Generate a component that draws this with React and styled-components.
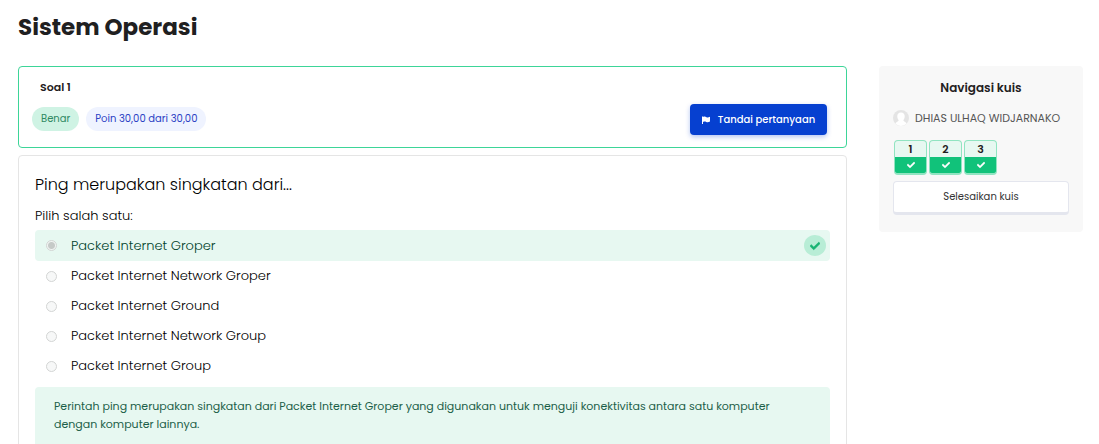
import React from 'react';
import styled, { createGlobalStyle } from 'styled-components';

const GlobalStyle = createGlobalStyle`
  *, *::before, *::after { box-sizing: border-box; }
  html { scrollbar-width: none; }
  body {
    margin: 0;
    background: #fff;
    color: #1f2021;
    font-family: Poppins, Inter, "Liberation Sans", sans-serif;
    font-size: 13px;
  }
  button, input { font-family: inherit; }
`;

const Page = styled.div`
  padding: 8px 16px 0 18px;
`;

const Title = styled.h1`
  margin: 0 0 20px;
  font-size: 23px;
  line-height: 38px;
  font-weight: 700;
`;

const Columns = styled.div`
  display: grid;
  grid-template-columns: minmax(0, 1fr) 204px;
  gap: 32px;
  align-items: start;
`;

const Main = styled.main`
  display: flex;
  flex-direction: column;
  gap: 7px;
`;

const InfoCard = styled.section`
  display: flex;
  align-items: flex-end;
  justify-content: space-between;
  padding: 12px 19px 12px 13px;
  border: 1px solid #3dd598;
  border-radius: 4px;
`;

const QuestionNumber = styled.h2`
  margin: 0 0 12px 8px;
  font-size: 11px;
  line-height: 16px;
  font-weight: 600;
`;

const Badges = styled.div`
  display: flex;
  gap: 7px;
  margin-bottom: 4px;
`;

const Badge = styled.span`
  padding: 0 9px;
  border-radius: 12px;
  font-size: 10px;
  line-height: 24px;
  background: ${(p) => (p.$correct ? '#cff3e4' : '#eff3ff')};
  color: ${(p) => (p.$correct ? '#2f8a62' : '#2b41c4')};
`;

const FlagButton = styled.button`
  display: flex;
  align-items: center;
  justify-content: center;
  gap: 8px;
  width: 137px;
  height: 31px;
  padding: 0;
  border: 0;
  border-radius: 4px;
  background: #0640d0;
  box-shadow: 0 2px 5px rgba(6, 64, 208, 0.3);
  color: #fff;
  font-size: 10px;
  font-weight: 500;
  white-space: nowrap;
`;

const QuestionCard = styled.section`
  padding: 17px 16px 20px;
  border: 1px solid #e5e5e5;
  border-radius: 4px;
`;

const QuestionText = styled.p`
  margin: 0 0 8px;
  color: #000;
  font-size: 16px;
  line-height: 24px;
  font-weight: 300;
`;

const Options = styled.fieldset`
  margin: 0 0 6px;
  padding: 0;
  border: 0;
  color: #000;
  font-weight: 300;
`;

const Prompt = styled.legend`
  padding: 0 0 3px;
  line-height: 22px;
`;

const Option = styled.div`
  display: flex;
  align-items: center;
  gap: 14px;
  height: ${(p) => (p.$correct ? '31px' : '30px')};
  padding: 0 4px 0 11px;
  border-radius: 4px;
  background: ${(p) => (p.$correct ? '#e7f8f1' : 'transparent')};
  color: ${(p) => (p.$correct ? '#00422b' : '#000')};

  label { flex: 1; }
`;

const Radio = styled.input`
  appearance: none;
  width: 11px;
  height: 11px;
  margin: 0;
  border: 1px solid #d3d5d4;
  border-radius: 50%;
  background: #f7f8f8;

  &:checked {
    background: radial-gradient(circle, #c6cac8 0 3px, #f1f5f3 4px);
  }
`;

const CorrectMark = styled.span`
  display: grid;
  place-items: center;
  width: 22px;
  height: 21px;
  border-radius: 50%;
  background: #b8edd6;
  color: #17b372;
`;

const Feedback = styled.div`
  min-height: 72px;
  padding: 10px 19px;
  border-radius: 4px;
  background: #e7f8f1;
  color: #1c5f49;
  font-size: 11px;
  line-height: 18px;

  p { margin: 0; max-width: 736px; }
`;

const Sidebar = styled.aside`
  padding: 12px 14px 17px;
  border-radius: 4px;
  background: #f8f8f8;
`;

const SidebarTitle = styled.h2`
  margin: 0 0 10px;
  font-size: 12px;
  line-height: 20px;
  font-weight: 600;
  text-align: center;
`;

const User = styled.div`
  display: flex;
  align-items: center;
  gap: 6px;
  height: 20px;
  margin-bottom: 12px;
  color: #555;
  font-size: 11px;
  white-space: nowrap;
`;

const QuizNav = styled.nav`
  display: flex;
  gap: 2px;
  padding-left: 1px;
`;

const QuizLink = styled.a`
  display: flex;
  flex-direction: column;
  width: 33px;
  height: 35px;
  overflow: hidden;
  border: 1px solid #91e4c1;
  border-bottom-width: 2px;
  border-radius: 4px;
  background: #e7f8f1;
  color: #1f2021;
  font-size: 11px;
  font-weight: 600;
  line-height: 16px;
  text-align: center;
  text-decoration: none;
`;

const QuizState = styled.span`
  flex: 1;
  display: grid;
  place-items: center;
  background: #11c27a;
  color: #fff;
`;

const FinishButton = styled.button`
  display: block;
  width: 100%;
  height: 34px;
  margin-top: 6px;
  padding: 0;
  border: 1px solid #e4e6ee;
  border-bottom-width: 3px;
  border-radius: 4px;
  background: #fff;
  color: #333;
  font-size: 10px;
  font-weight: 400;
`;

const CheckIcon = ({ size }) => (
  <svg width={size} height={size} viewBox="0 0 512 512" fill="currentColor" stroke="currentColor" strokeWidth="30" aria-hidden="true">
    <path d="M173.9 439.4 7.5 273c-10-10-10-26.200 0-36.200l36.200-36.200c10-10 26.200-10 36.200 0L192 312.700 432.100 72.600c10-10 26.200-10 36.200 0l36.200 36.200c10 10 10 26.200 0 36.200L210.100 439.400c-10 10-26.200 10-36.200 0z" />
  </svg>
);

const FlagIcon = () => (
  <svg width="8" height="8" viewBox="0 0 16 16" fill="currentColor" aria-hidden="true">
    <path d="M0 1h2v15H0zM2 2c3-1.500 5-.5 7 .3 2 .8 4 .5 7-.6v9.500c-3 1.300-5 1.500-7.500.6C6 11 4.500 11 2 12.200z" />
  </svg>
);

const AvatarIcon = () => (
  <svg width="16" height="16" viewBox="0 0 16 16" aria-hidden="true">
    <circle cx="8" cy="8" r="8" fill="#e4e4e4" />
    <path d="M8 2.500c2.600 0 3.900 1.800 3.700 4.300-.1 1.600-.7 2.700-1.400 3.500.1 1.300 2.600 1.400 3.400 3.300A8 8 0 0 1 8 16a8 8 0 0 1-5.700-2.400c.8-1.900 3.300-2 3.400-3.300-.7-.8-1.300-1.900-1.400-3.500C4.100 4.300 5.400 2.500 8 2.500z" fill="#fff" />
  </svg>
);

const options = [
  'Packet Internet Groper',
  'Packet Internet Network Groper',
  'Packet Internet Ground',
  'Packet Internet Network Group',
  'Packet Internet Group',
];

export default function App() {
  return (
    <>
      <GlobalStyle />
      <Page>
        <Title>Sistem Operasi</Title>
        <Columns>
          <Main>
            <InfoCard>
              <div>
                <QuestionNumber>Soal 1</QuestionNumber>
                <Badges>
                  <Badge $correct>Benar</Badge>
                  <Badge>Poin 30,00 dari 30,00</Badge>
                </Badges>
              </div>
              <FlagButton type="button">
                <FlagIcon />
                Tandai pertanyaan
              </FlagButton>
            </InfoCard>
            <QuestionCard>
              <QuestionText>Ping merupakan singkatan dari...</QuestionText>
              <Options>
                <Prompt>Pilih salah satu:</Prompt>
                {options.map((text, i) => (
                  <Option key={text} $correct={i === 0}>
                    <Radio type="radio" name="answer" id={`answer-${i}`} defaultChecked={i === 0} disabled />
                    <label htmlFor={`answer-${i}`}>{text}</label>
                    {i === 0 && (
                      <CorrectMark>
                        <CheckIcon size={10} />
                      </CorrectMark>
                    )}
                  </Option>
                ))}
              </Options>
              <Feedback>
                <p>
                  Perintah ping merupakan singkatan dari Packet Internet Groper yang digunakan untuk menguji
                  konektivitas antara satu komputer dengan komputer lainnya.
                </p>
              </Feedback>
            </QuestionCard>
          </Main>
          <Sidebar>
            <SidebarTitle>Navigasi kuis</SidebarTitle>
            <User>
              <AvatarIcon />
              DHIAS ULHAQ WIDJARNAKO
            </User>
            <QuizNav>
              {[1, 2, 3].map((n) => (
                <QuizLink key={n} href={`#${n}`}>
                  {n}
                  <QuizState>
                    <CheckIcon size={8} />
                  </QuizState>
                </QuizLink>
              ))}
            </QuizNav>
            <FinishButton type="button">Selesaikan kuis</FinishButton>
          </Sidebar>
        </Columns>
      </Page>
    </>
  );
}
